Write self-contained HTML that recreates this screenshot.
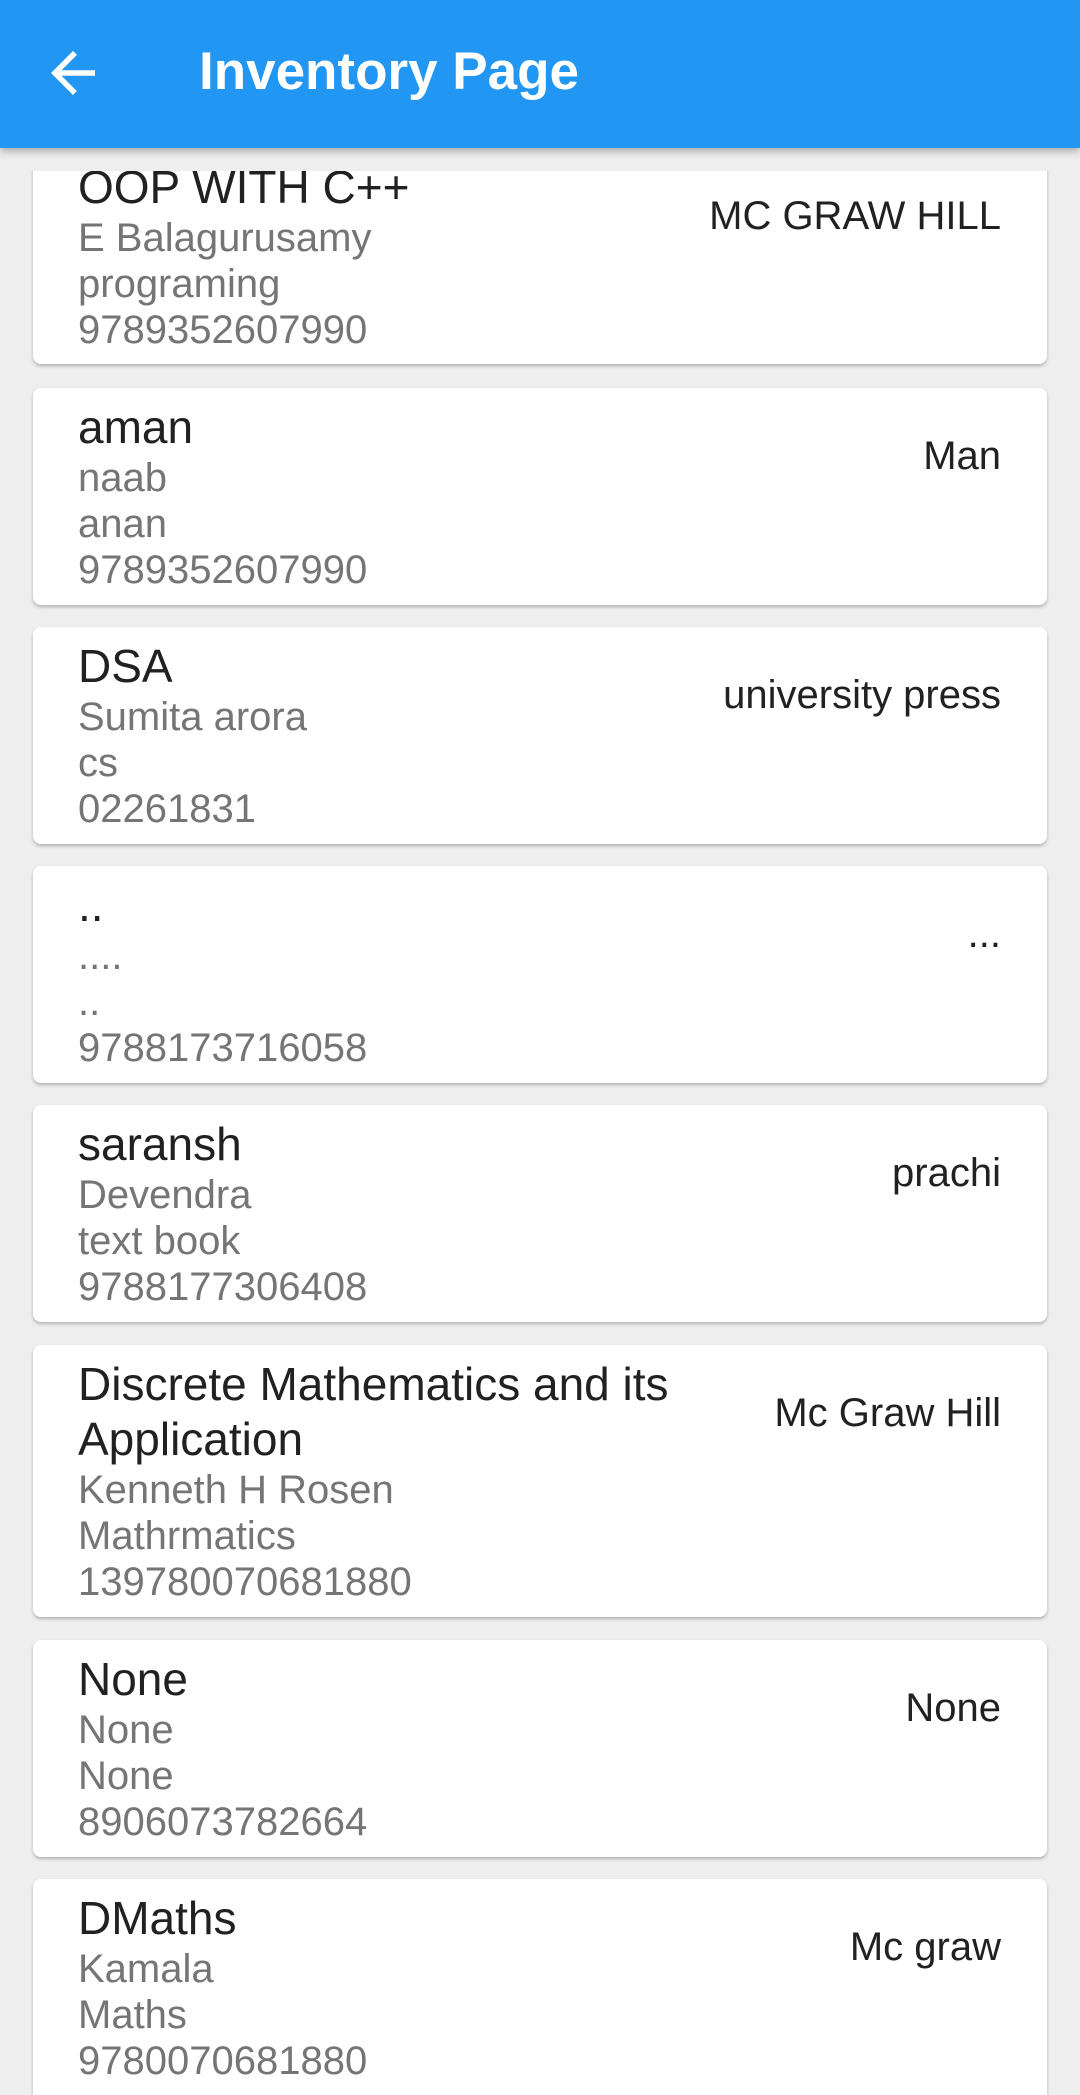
<!DOCTYPE html>
<html><head><meta charset="utf-8"><style>
html,body{margin:0;padding:0;}
body{width:1080px;height:2095px;overflow:hidden;background:#eeeeee;font-family:"Liberation Sans",Arial,sans-serif;position:relative;}
.bar{position:absolute;left:0;top:0;width:1080px;height:148px;background:#2196F3;box-shadow:0 3px 8px rgba(0,0,0,0.3);z-index:5;}
.bar h1{position:absolute;left:199px;top:43px;margin:0;color:#fff;font-size:53px;font-weight:bold;line-height:58px;}
.bar svg{position:absolute;left:40px;top:40px;}
.list{position:absolute;left:0;top:171px;width:1080px;height:1924px;overflow:hidden;}
.card{position:absolute;left:33px;width:1014px;background:#fff;border-radius:8px;box-shadow:0 2px 3px rgba(0,0,0,0.25);box-sizing:border-box;padding:12px 0 12px 45px;}
.t{font-size:46px;line-height:55px;color:#212121;}
.s{font-size:40px;line-height:46px;color:#757575;}
.r{position:absolute;right:46px;top:45px;font-size:40px;line-height:46px;color:#212121;}
</style></head><body>
<div class="bar">
<svg width="66" height="66" viewBox="0 0 24 24"><path d="M20 11H7.83l5.59-5.59L12 4l-8 8 8 8 1.41-1.41L7.83 13H20v-2z" fill="#fff"/></svg>
<h1>Inventory Page</h1>
</div>
<div class="list">
<div class="card" style="top:-23px;height:216px;border-radius:0 0 8px 8px;"><div class="t">OOP WITH C++</div><div class="s">E Balagurusamy</div><div class="s">programing</div><div class="s">9789352607990</div><div class="r">MC GRAW HILL</div></div>
<div class="card" style="top:217px;height:217px;"><div class="t">aman</div><div class="s">naab</div><div class="s">anan</div><div class="s">9789352607990</div><div class="r">Man</div></div>
<div class="card" style="top:456px;height:217px;"><div class="t">DSA</div><div class="s">Sumita arora</div><div class="s">cs</div><div class="s">02261831</div><div class="r">university press</div></div>
<div class="card" style="top:695px;height:217px;"><div class="t">..</div><div class="s">....</div><div class="s">..</div><div class="s">9788173716058</div><div class="r">...</div></div>
<div class="card" style="top:934px;height:217px;"><div class="t">saransh</div><div class="s">Devendra</div><div class="s">text book</div><div class="s">9788177306408</div><div class="r">prachi</div></div>
<div class="card" style="top:1174px;height:272px;"><div class="t">Discrete Mathematics and its<br>Application</div><div class="s">Kenneth H Rosen</div><div class="s">Mathrmatics</div><div class="s">139780070681880</div><div class="r">Mc Graw Hill</div></div>
<div class="card" style="top:1469px;height:217px;"><div class="t">None</div><div class="s">None</div><div class="s">None</div><div class="s">8906073782664</div><div class="r">None</div></div>
<div class="card" style="top:1708px;height:240px;"><div class="t">DMaths</div><div class="s">Kamala</div><div class="s">Maths</div><div class="s">9780070681880</div><div class="r">Mc graw</div></div>
</div>
</body></html>
